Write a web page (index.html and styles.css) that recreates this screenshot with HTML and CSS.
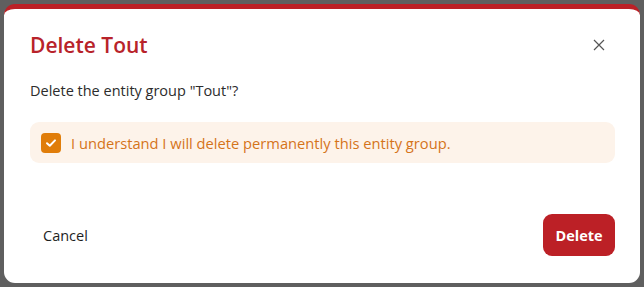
FILE: index.html
```html
<!DOCTYPE html>
<html>
<head>
<meta charset="utf-8">
<link rel="stylesheet" href="styles.css">
</head>
<body>
<div class="dialog">
  <div class="header">
    <h1 class="title">Delete Tout</h1>
    <button class="close" aria-label="Close">
      <svg width="12" height="12" viewBox="0 0 12 12"><path d="M1 1L11 11M11 1L1 11" stroke="#555" stroke-width="1.2" fill="none"/></svg>
    </button>
  </div>
  <p class="message">Delete the entity group "Tout"?</p>
  <label class="confirm">
    <span class="check"><svg width="12" height="10" viewBox="0 0 12 10"><path d="M2 5.2L4.8 7.8L10 2.4" stroke="#fff" stroke-width="2" fill="none" stroke-linecap="round" stroke-linejoin="round"/></svg></span>
    <span class="confirm-text">I understand I will delete permanently this entity group.</span>
  </label>
  <div class="footer">
    <button class="btn-cancel">Cancel</button>
    <button class="btn-delete">Delete</button>
  </div>
</div>
</body>
</html>
```
FILE: styles.css
```css
html, body {
  margin: 0;
  padding: 0;
}
body {
  background: #5f5f5f;
  width: 644px;
  height: 287px;
  padding: 4px;
  box-sizing: border-box;
  font-family: "Open Sans", "Noto Sans", sans-serif;
}
.dialog {
  background: #fff;
  border-top: 5px solid #bc2026;
  border-radius: 11px;
  height: 279px;
  width: 636px;
  box-sizing: border-box;
  padding: 0 25px 0 26px;
  display: flex;
  flex-direction: column;
}
.header {
  display: flex;
  align-items: center;
  justify-content: space-between;
  height: 72px;
}
.title {
  margin: 0;
  font-size: 21px;
  font-weight: 600;
  color: #b8232a;
}
.close {
  border: 0;
  background: none;
  padding: 0;
  width: 20px;
  height: 20px;
  display: flex;
  align-items: center;
  justify-content: center;
  margin-right: 6px;
}
.message {
  margin: 0;
  font-size: 14.5px;
  color: #2c2c2c;
  line-height: 20px;
}
.confirm {
  margin-top: 21px;
  background: #fdf3ea;
  border-radius: 9px;
  height: 41px;
  display: flex;
  align-items: center;
  padding-left: 11px;
  gap: 10px;
}
.check {
  width: 20px;
  height: 20px;
  border-radius: 4px;
  background: #e07d0a;
  display: flex;
  align-items: center;
  justify-content: center;
}
.confirm-text {
  font-size: 14.7px;
  color: #d5741a;
}
.footer {
  margin-top: 51px;
  display: flex;
  align-items: center;
  justify-content: space-between;
}
.btn-cancel {
  border: 0;
  background: none;
  font-family: inherit;
  font-size: 14.5px;
  font-weight: 500;
  color: #1e1e1e;
  padding: 0 0 0 13px;
}
.btn-delete {
  border: 0;
  background: #bc2026;
  color: #fff;
  font-family: inherit;
  font-size: 14.5px;
  font-weight: 700;
  border-radius: 9px;
  width: 72px;
  height: 42px;
}
```
